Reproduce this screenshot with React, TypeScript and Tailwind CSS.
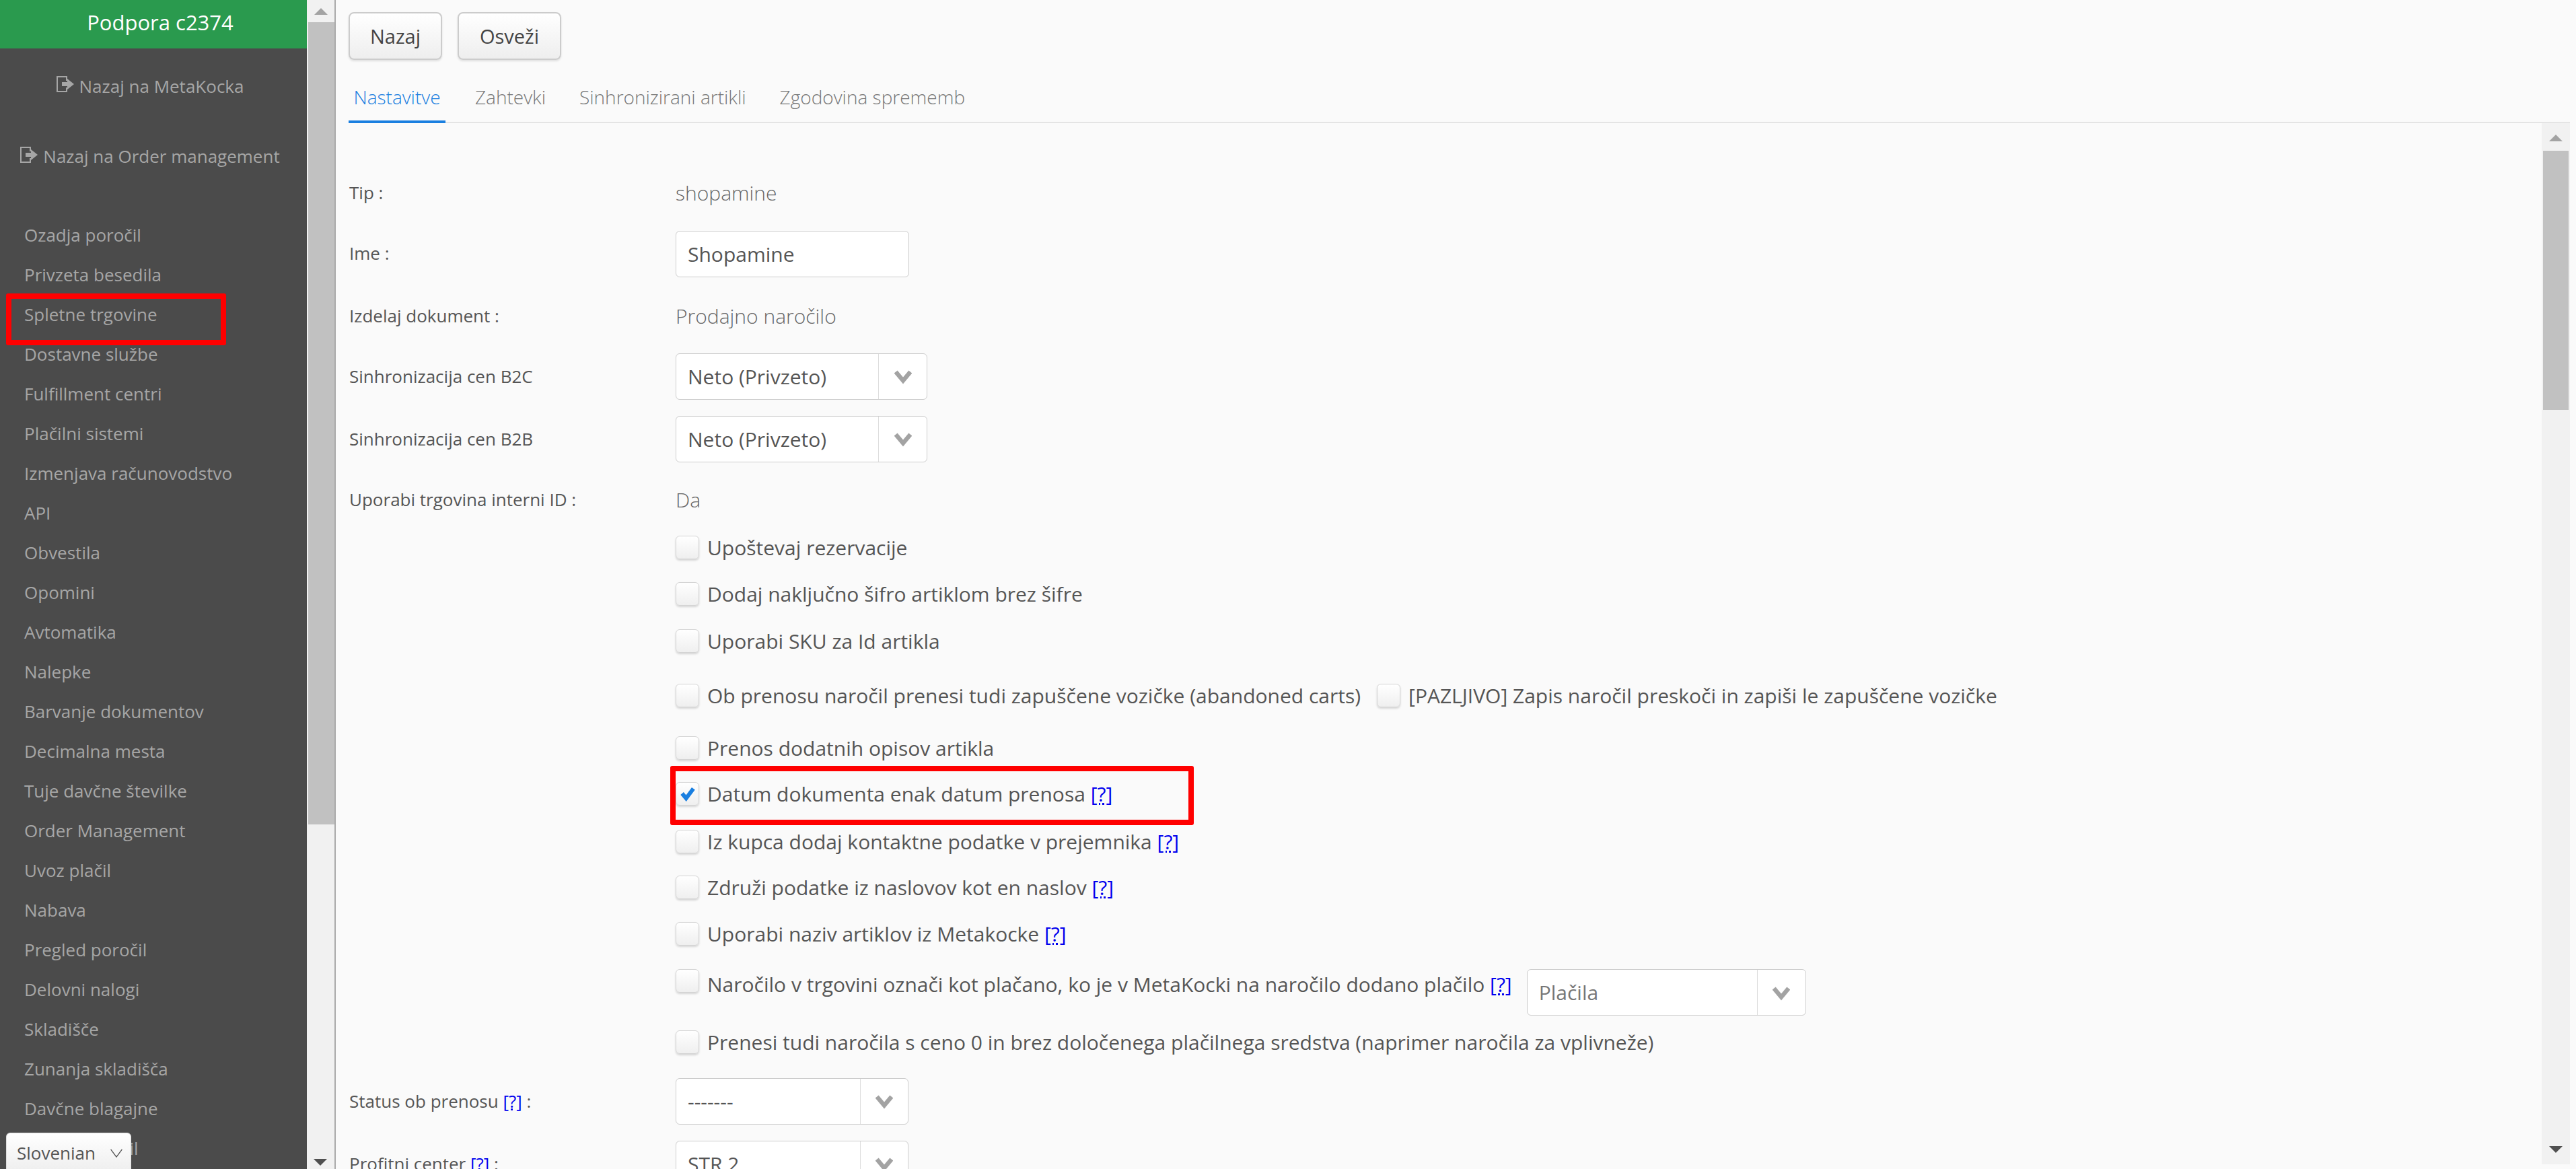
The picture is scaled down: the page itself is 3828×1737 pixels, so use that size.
import React from 'react';

const menu = [
	"Ozadja poročil", "Privzeta besedila", "Spletne trgovine", "Dostavne službe", "Fulfillment centri",
	"Plačilni sistemi", "Izmenjava računovodstvo", "API", "Obvestila", "Opomini", "Avtomatika", "Nalepke",
	"Barvanje dokumentov", "Decimalna mesta", "Tuje davčne številke", "Order Management", "Uvoz plačil",
	"Nabava", "Pregled poročil", "Delovni nalogi", "Skladišče", "Zunanja skladišča", "Davčne blagajne", "Nakup poročil",
];

const Help = () => <a className="text-[#0000ee] underline decoration-dotted">[?]</a>;

const LogOut = () => (
	<svg viewBox="0 0 26 24" className="w-[26px] h-[24px] mr-[8px] inline-block shrink-0 -mt-[6px]" fill="#a6a6a6">
		<path d="M0 0h16v2H2v20h14v2H0z" />
		<path d="M14 2h2v5h-2zM14 17h2v5h-2z" />
		<path d="M8 9h8V4l10 8-10 8v-5H8z" />
	</svg>
);

const Chevron = () => (
	<svg viewBox="0 0 24 24" className="w-[26px] h-[26px]" fill="none" stroke="#a3a3a3" strokeWidth="6">
		<path d="M2 6l10 12L22 6" />
	</svg>
);

const Select = ({ value, className, divider }: { value: string; className: string; divider: string }) => (
	<div className={"flex items-stretch bg-white border border-[#ccc] rounded-[6px] " + className}>
		<div className="flex-1 flex items-center pl-[17px]">{value}</div>
		<div className={"flex items-center justify-center border-l border-[#ddd] " + divider}><Chevron /></div>
	</div>
);

const Check = ({ checked }: { checked?: boolean }) => (
	<span className="w-[35px] h-[35px] shrink-0 rounded-[6px] border border-[#d4d4d4] bg-gradient-to-b from-white to-[#efefef] shadow-[0_2px_3px_rgba(0,0,0,0.15)] flex items-center justify-center">
		{checked && (
			<svg viewBox="0 0 20 20" className="w-[24px] h-[24px]" fill="none" stroke="#1a7fe0" strokeWidth="5">
				<path d="M3 10l5 6 9-12" />
			</svg>
		)}
	</span>
);

const Row = ({ label, className, children }: { label?: React.ReactNode; className: string; children?: React.ReactNode }) => (
	<div className={"flex items-center " + className}>
		<div className="w-[486px] shrink-0 pl-[1px] text-[26px]">{label}</div>
		{children}
	</div>
);

const CheckRow = ({ className, children, checked }: { className: string; children: React.ReactNode; checked?: boolean }) => (
	<Row className={className}>
		<Check checked={checked} />
		<span className="ml-[12px] flex items-center whitespace-pre">{children}</span>
	</Row>
);

export default function App() {
	return (
		<div className="relative flex h-[1737px] w-[3828px] overflow-hidden bg-[#fafafa] text-[30px] text-[#555] font-['Open_Sans',sans-serif]">
			<aside className="relative w-[456px] shrink-0 bg-[#4b4b4b] overflow-hidden">
				<div className="h-[72px] bg-[#2a9a4e] text-white text-[31px] flex items-center justify-center pb-[6px] pl-[20px]">Podpora c2374</div>
				<div className="h-[106px] flex items-center justify-center text-[#a6a6a6] text-[26px] pt-[6px] pr-[10px]"><LogOut />Nazaj na MetaKocka</div>
				<div className="h-[105px] flex items-center justify-center text-[#a6a6a6] text-[26px] whitespace-nowrap pt-[4px] pr-[10px]"><LogOut />Nazaj na Order management</div>
				<ul className="pt-[37px] pl-[36px] text-[26px] text-[#a6a6a6]">
					{menu.map((m) => (
						<li key={m} className="h-[59px] flex items-center whitespace-nowrap">{m}</li>
					))}
				</ul>
				<div className="absolute left-[9px] top-[1683px] w-[186px] h-[60px] rounded-t-[6px] bg-gradient-to-b from-white to-[#eee] border border-[#ddd] flex items-center pl-[15px] text-[26px] text-[#555]">
					Slovenian
					<svg viewBox="0 0 20 14" className="w-[22px] h-[13px] ml-[20px]" fill="none" stroke="#555" strokeWidth="1.5"><path d="M1 1l9 12 9-12" /></svg>
				</div>
			</aside>

			<div className="relative w-[41px] shrink-0 bg-[#f1f1f1]">
				<div className="flex justify-center pt-[12px]"><div className="w-0 h-0 border-x-[10px] border-x-transparent border-b-[10px] border-b-[#a3a3a3]" /></div>
				<div className="absolute left-[2px] right-0 top-[33px] h-[1192px] bg-[#c1c1c1]" />
				<div className="absolute left-[10px] bottom-[5px] w-0 h-0 border-x-[10px] border-x-transparent border-t-[10px] border-t-[#505050]" />
			</div>
			<div className="w-[2px] bg-[#aaa] shrink-0" />

			<main className="flex-1 min-w-0 flex flex-col pl-[19px] pr-[9px]">
				<div className="flex gap-[23px] pt-[18px]">
					<button className="w-[139px] h-[71px] rounded-[8px] border-2 border-[#ccc] bg-gradient-to-b from-white to-[#eee] shadow-[0_2px_3px_rgba(0,0,0,0.1)] text-[#444] text-[29px]">Nazaj</button>
					<button className="w-[154px] h-[71px] rounded-[8px] border-2 border-[#ccc] bg-gradient-to-b from-white to-[#eee] shadow-[0_2px_3px_rgba(0,0,0,0.1)] text-[#444] text-[29px]">Osveži</button>
				</div>

				<div className="flex h-[94px] border-b-2 border-[#e4e4e4] text-[28px] font-light text-[#777]">
					<div className="w-[144px] flex items-center justify-center pt-[20px] text-[#1a7fe0] border-b-[4px] border-[#1a7fe0] -mb-[2px]">Nastavitve</div>
					<div className="ml-[44px] flex items-center pt-[18px]">Zahtevki</div>
					<div className="ml-[50px] flex items-center pt-[18px]">Sinhronizirani artikli</div>
					<div className="ml-[50px] flex items-center pt-[18px]">Zgodovina sprememb</div>
				</div>

				<div className="relative flex-1 flex min-h-0">
					<div className="flex-1 min-w-0 overflow-hidden pt-[63px]">
						<Row label="Tip :" className="h-[80px]"><span className="font-light text-[#666]">shopamine</span></Row>
						<Row label="Ime :" className="h-[100px]">
							<div className="w-[347px] h-[69px] bg-white border border-[#ccc] rounded-[6px] flex items-center pl-[17px] mt-[2px]">Shopamine</div>
						</Row>
						<Row label="Izdelaj dokument :" className="h-[86px]"><span className="font-light text-[#666]">Prodajno naročilo</span></Row>
						<Row label="Sinhronizacija cen B2C" className="h-[94px]"><Select value="Neto (Privzeto)" className="w-[374px] h-[69px]" divider="w-[72px]" /></Row>
						<Row label="Sinhronizacija cen B2B" className="h-[92px]"><Select value="Neto (Privzeto)" className="w-[374px] h-[69px]" divider="w-[72px]" /></Row>
						<Row label="Uporabi trgovina interni ID :" className="h-[88px]"><span className="font-light text-[#666]">Da</span></Row>
						<CheckRow className="h-[54px]">Upoštevaj rezervacije</CheckRow>
						<CheckRow className="h-[84px]">Dodaj naključno šifro artiklom brez šifre</CheckRow>
						<CheckRow className="h-[56px]">Uporabi SKU za Id artikla</CheckRow>
						<CheckRow className="h-[106px]">
							Ob prenosu naročil prenesi tudi zapuščene vozičke (abandoned carts)
							<span className="flex items-center ml-[24px]"><Check /><span className="ml-[12px]">[PAZLJIVO] Zapis naročil preskoči in zapiši le zapuščene vozičke</span></span>
						</CheckRow>
						<CheckRow className="h-[50px]">Prenos dodatnih opisov artikla</CheckRow>
						<CheckRow className="h-[86px]" checked>Datum dokumenta enak datum prenosa <Help /></CheckRow>
						<CheckRow className="h-[56px]">Iz kupca dodaj kontaktne podatke v prejemnika <Help /></CheckRow>
						<CheckRow className="h-[80px]">Združi podatke iz naslovov kot en naslov <Help /></CheckRow>
						<CheckRow className="h-[58px]">Uporabi naziv artiklov iz Metakocke <Help /></CheckRow>
						<div className="h-[82px] flex items-start pl-[486px] pt-[24px]">
							<Check />
							<span className="ml-[12px] whitespace-pre">Naročilo v trgovini označi kot plačano, ko je v MetaKocki na naročilo dodano plačilo <Help /></span>
							<Select value="Plačila" className="w-[415px] h-[69px] ml-[22px] text-[#777]" divider="w-[72px]" />
						</div>
						<CheckRow className="h-[100px]">Prenesi tudi naročila s ceno 0 in brez določenega plačilnega sredstva (naprimer naročila za vplivneže)</CheckRow>
						<Row label={<>Status ob prenosu <Help /> :</>} className="h-[76px]"><Select value="-------" className="w-[346px] h-[69px]" divider="w-[71px]" /></Row>
						<Row label={<>Profitni center <Help /> :</>} className="h-[110px]"><Select value="STR 2" className="w-[346px] h-[69px]" divider="w-[71px]" /></Row>
					</div>

					<div className="relative w-[42px] shrink-0 bg-[#f1f1f1] mb-[7px]">
						<div className="flex justify-center pt-[17px]"><div className="w-0 h-0 border-x-[10px] border-x-transparent border-b-[10px] border-b-[#a3a3a3]" /></div>
						<div className="absolute left-[2px] right-[2px] top-[41px] h-[385px] bg-[#c1c1c1]" />
						<div className="absolute left-[11px] bottom-[17px] w-0 h-0 border-x-[10px] border-x-transparent border-t-[10px] border-t-[#505050]" />
					</div>
				</div>
			</main>

			<div className="absolute left-[9px] top-[436px] w-[327px] h-[77px] border-[8px] border-[#ff0000] rounded-[3px]" />
			<div className="absolute left-[996px] top-[1138px] w-[778px] h-[88px] border-[8px] border-[#ff0000] rounded-[3px]" />
		</div>
	);
}
